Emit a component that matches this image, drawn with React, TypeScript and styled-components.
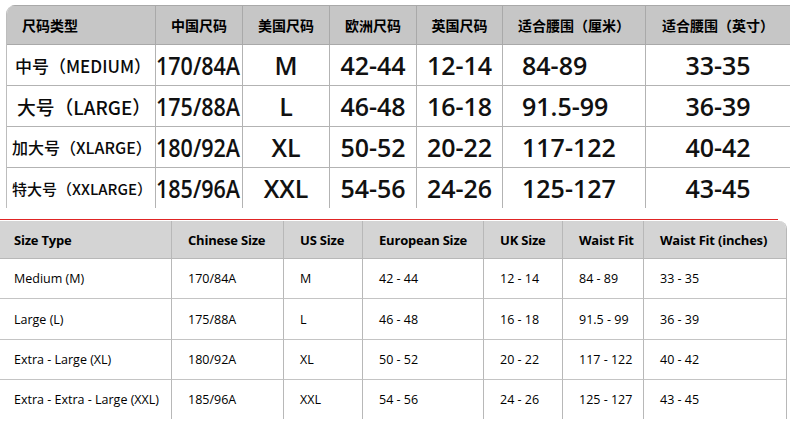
import styled, { createGlobalStyle } from 'styled-components';
import React from 'react';

const GlobalStyle = createGlobalStyle`
  html, body {
    margin: 0;
    padding: 0;
    background: #ffffff;
  }
  body {
    width: 790px;
    height: 438px;
    overflow: hidden;
  }
`;

const Page = styled.div`
  display: flex;
  flex-direction: column;
  padding-top: 5px;
`;

// ---------- top chart (chinese) ----------

const CnTable = styled.div`
  margin-left: 6px;
  display: grid;
  grid-template-columns: 149px 87px 87px 87px 86px 143px 1fr;
  grid-template-rows: 40px 41px 41px 41px 40px;
  border-left: 1px solid #bdbdbd;
  border-top-left-radius: 9px;
  overflow: hidden;
`;

type CellProps = {
  $align?: 'left' | 'center';
  $pad?: number;
  $last?: boolean;
  $bottom?: boolean;
};

const CnHead = styled.div<CellProps>`
  display: flex;
  align-items: center;
  justify-content: ${(p) => (p.$align === 'left' ? 'flex-start' : 'center')};
  padding-left: ${(p) => p.$pad ?? 0}px;
  background: #c6c6c6;
  border-top: 1px solid #a9a9a9;
  border-bottom: 1px solid #a9a9a9;
  border-right: ${(p) => (p.$last ? 'none' : '1px solid #a9a9a9')};
  font-family: 'Noto Sans CJK SC', sans-serif;
  font-weight: 700;
  font-size: 14px;
  color: #000;
  white-space: nowrap;
`;

const CnCell = styled.div<CellProps>`
  display: flex;
  align-items: center;
  justify-content: ${(p) => (p.$align === 'left' ? 'flex-start' : 'center')};
  padding-left: ${(p) => p.$pad ?? 0}px;
  border-bottom: ${(p) => (p.$bottom ? '1px solid #b3b3b3' : 'none')};
  border-right: ${(p) => (p.$last ? 'none' : '1px solid #b3b3b3')};
  font-family: 'Open Sans', 'Liberation Sans', sans-serif;
  font-weight: 600;
  font-size: 25px;
  color: #111;
  white-space: nowrap;
  overflow: hidden;
`;

const SizeName = styled.span<{ $size: number }>`
  font-family: 'Noto Sans CJK SC', sans-serif;
  font-weight: 500;
  font-size: ${(p) => p.$size}px;
  color: #0a0a0a;
`;

const Squeezed = styled.span`
  display: inline-block;
  transform: scaleX(0.86);
  transform-origin: left center;
`;

// ---------- bottom chart (english) ----------

const RedRule = styled.div`
  height: 1px;
  margin-top: 11px;
  margin-right: 12px;
  background: #e02525;
`;

const EnTable = styled.div`
  margin-top: 1px;
  width: 786px;
  display: grid;
  grid-template-columns: 172px 112px 79px 121px 79px 81px 142px;
  grid-template-rows: 38px 40px 41px 40px 39px;
  border-right: 1px solid #b8b8b8;
  border-top-right-radius: 8px;
  overflow: hidden;
`;

const EnHead = styled.div<CellProps>`
  display: flex;
  align-items: center;
  padding-left: ${(p) => p.$pad ?? 15}px;
  background: #d4d4d4;
  border-bottom: 1px solid #b8b8b8;
  border-right: ${(p) => (p.$last ? 'none' : '1px solid #b8b8b8')};
  font-family: 'Open Sans', 'Liberation Sans', sans-serif;
  font-weight: 700;
  font-size: 13px;
  letter-spacing: -0.2px;
  color: #000;
  white-space: nowrap;
`;

const EnCell = styled.div<CellProps>`
  display: flex;
  align-items: center;
  padding-left: ${(p) => p.$pad ?? 15}px;
  border-bottom: ${(p) => (p.$bottom ? '1px solid #c4c4c4' : 'none')};
  border-right: ${(p) => (p.$last ? 'none' : '1px solid #b8b8b8')};
  font-family: 'Open Sans', 'Liberation Sans', sans-serif;
  font-weight: 500;
  font-size: 12.5px;
  color: #000;
  white-space: nowrap;
`;

const cnHeaders = ['尺码类型', '中国尺码', '美国尺码', '欧洲尺码', '英国尺码', '适合腰围（厘米）', '适合腰围（英寸）'];

const cnRows = [
  { name: '中号（MEDIUM）', size: 17, pad: 8, cn: '170/84A', us: 'M', eu: '42-44', uk: '12-14', cm: '84-89', inch: '33-35' },
  { name: '大号（LARGE）', size: 18.8, pad: 10, cn: '175/88A', us: 'L', eu: '46-48', uk: '16-18', cm: '91.5-99', inch: '36-39' },
  { name: '加大号（XLARGE）', size: 16, pad: 5, cn: '180/92A', us: 'XL', eu: '50-52', uk: '20-22', cm: '117-122', inch: '40-42' },
  { name: '特大号（XXLARGE）', size: 15, pad: 5, cn: '185/96A', us: 'XXL', eu: '54-56', uk: '24-26', cm: '125-127', inch: '43-45' },
];

const enHeaders = ['Size Type', 'Chinese Size', 'US Size', 'European Size', 'UK Size', 'Waist Fit', 'Waist Fit (inches)'];

const enRows = [
  ['Medium (M)', '170/84A', 'M', '42 - 44', '12 - 14', '84 - 89', '33 - 35'],
  ['Large (L)', '175/88A', 'L', '46 - 48', '16 - 18', '91.5 - 99', '36 - 39'],
  ['Extra - Large (XL)', '180/92A', 'XL', '50 - 52', '20 - 22', '117 - 122', '40 - 42'],
  ['Extra - Extra - Large (XXL)', '185/96A', 'XXL', '54 - 56', '24 - 26', '125 - 127', '43 - 45'],
];

const App = () => {
  return (
    <Page>
      <GlobalStyle />
      <CnTable>
        {cnHeaders.map((h, i) => (
          <CnHead key={h} $align={i === 0 ? 'left' : 'center'} $pad={i === 0 ? 15 : 0} $last={i === 6}>
            {h}
          </CnHead>
        ))}
        {cnRows.map((r, ri) => {
          const bottom = ri < cnRows.length - 1;
          return (
            <React.Fragment key={r.cn}>
              <CnCell $align="left" $pad={r.pad} $bottom={bottom}>
                <SizeName $size={r.size}>{r.name}</SizeName>
              </CnCell>
              <CnCell $align="left" $pad={0} $bottom={bottom}>
                <Squeezed>{r.cn}</Squeezed>
              </CnCell>
              <CnCell $bottom={bottom}>{r.us}</CnCell>
              <CnCell $bottom={bottom}>{r.eu}</CnCell>
              <CnCell $bottom={bottom}>{r.uk}</CnCell>
              <CnCell $align="left" $pad={19} $bottom={bottom}>
                {r.cm}
              </CnCell>
              <CnCell $bottom={bottom} $last>
                {r.inch}
              </CnCell>
            </React.Fragment>
          );
        })}
      </CnTable>

      <RedRule />

      <EnTable>
        {enHeaders.map((h, i) => (
          <EnHead key={h} $pad={i === 0 ? 14 : 16} $last={i === 6}>
            {h}
          </EnHead>
        ))}
        {enRows.map((r, ri) => (
          <React.Fragment key={r[0]}>
            {r.map((v, ci) => (
              <EnCell key={ci} $pad={ci === 0 ? 14 : 16} $bottom={ri < enRows.length - 1} $last={ci === 6}>
                {v}
              </EnCell>
            ))}
          </React.Fragment>
        ))}
      </EnTable>
    </Page>
  );
};

export default App;
